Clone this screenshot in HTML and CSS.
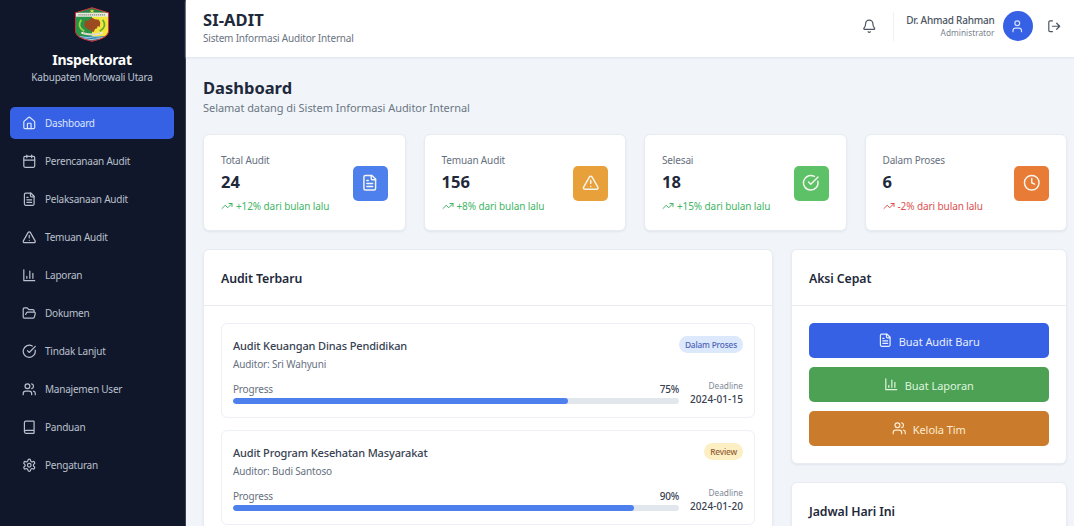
FILE: index.html
```html
<!DOCTYPE html>
<html lang="id">
<head>
<meta charset="utf-8">
<title>SI-ADIT</title>
<link rel="stylesheet" href="styles.css">
</head>
<body>
<svg class="sprite" width="0" height="0" aria-hidden="true">
  <symbol id="home" viewBox="0 0 24 24"><path d="M15 21v-8a1 1 0 0 0-1-1h-4a1 1 0 0 0-1 1v8"/><path d="M3 10a2 2 0 0 1 .709-1.528l7-5.999a2 2 0 0 1 2.582 0l7 5.999A2 2 0 0 1 21 10v9a2 2 0 0 1-2 2H5a2 2 0 0 1-2-2z"/></symbol>
  <symbol id="calendar" viewBox="0 0 24 24"><path d="M8 2v4M16 2v4M3 10h18"/><rect x="3" y="4" width="18" height="18" rx="2"/></symbol>
  <symbol id="file" viewBox="0 0 24 24"><path d="M15 2H6a2 2 0 0 0-2 2v16a2 2 0 0 0 2 2h12a2 2 0 0 0 2-2V7Z"/><path d="M14 2v4a2 2 0 0 0 2 2h4M10 9H8M16 13H8M16 17H8"/></symbol>
  <symbol id="alert" viewBox="0 0 24 24"><path d="m21.73 18-8-14a2 2 0 0 0-3.48 0l-8 14A2 2 0 0 0 4 21h16a2 2 0 0 0 1.73-3"/><path d="M12 9v4M12 17h.01"/></symbol>
  <symbol id="chart" viewBox="0 0 24 24"><path d="M3 3v18h18M18 17V9M13 17V5M8 17v-3"/></symbol>
  <symbol id="folder" viewBox="0 0 24 24"><path d="m6 14 1.5-2.9A2 2 0 0 1 9.24 10H20a2 2 0 0 1 1.94 2.5l-1.54 6a2 2 0 0 1-1.95 1.5H4a2 2 0 0 1-2-2V5a2 2 0 0 1 2-2h3.9a2 2 0 0 1 1.69.9l.81 1.2a2 2 0 0 0 1.67.9H18a2 2 0 0 1 2 2v2"/></symbol>
  <symbol id="check" viewBox="0 0 24 24"><path d="M21.801 10A10 10 0 1 1 17 3.335"/><path d="m9 11 3 3L22 4"/></symbol>
  <symbol id="users" viewBox="0 0 24 24"><path d="M16 21v-2a4 4 0 0 0-4-4H6a4 4 0 0 0-4 4v2"/><circle cx="9" cy="7" r="4"/><path d="M22 21v-2a4 4 0 0 0-3-3.87M16 3.13a4 4 0 0 1 0 7.75"/></symbol>
  <symbol id="book" viewBox="0 0 24 24"><path d="M4 19.5v-15A2.5 2.5 0 0 1 6.5 2H19a1 1 0 0 1 1 1v18a1 1 0 0 1-1 1H6.5a1 1 0 0 1 0-5H20"/></symbol>
  <symbol id="settings" viewBox="0 0 24 24"><path d="M12.22 2h-.44a2 2 0 0 0-2 2v.18a2 2 0 0 1-1 1.73l-.43.25a2 2 0 0 1-2 0l-.15-.08a2 2 0 0 0-2.73.73l-.22.38a2 2 0 0 0 .73 2.73l.15.1a2 2 0 0 1 1 1.72v.51a2 2 0 0 1-1 1.74l-.15.09a2 2 0 0 0-.73 2.73l.22.38a2 2 0 0 0 2.73.73l.15-.08a2 2 0 0 1 2 0l.43.25a2 2 0 0 1 1 1.73V20a2 2 0 0 0 2 2h.44a2 2 0 0 0 2-2v-.18a2 2 0 0 1 1-1.73l.43-.25a2 2 0 0 1 2 0l.15.08a2 2 0 0 0 2.73-.73l.22-.39a2 2 0 0 0-.73-2.73l-.15-.08a2 2 0 0 1-1-1.74v-.5a2 2 0 0 1 1-1.74l.15-.09a2 2 0 0 0 .73-2.73l-.22-.38a2 2 0 0 0-2.73-.73l-.15.08a2 2 0 0 1-2 0l-.43-.25a2 2 0 0 1-1-1.73V4a2 2 0 0 0-2-2z"/><circle cx="12" cy="12" r="3"/></symbol>
  <symbol id="bell" viewBox="0 0 24 24"><path d="M10.268 21a2 2 0 0 0 3.464 0"/><path d="M3.262 15.326A1 1 0 0 0 4 17h16a1 1 0 0 0 .74-1.673C19.41 13.956 18 12.499 18 8A6 6 0 0 0 6 8c0 4.499-1.411 5.956-2.738 7.326"/></symbol>
  <symbol id="user" viewBox="0 0 24 24"><path d="M19 21v-2a4 4 0 0 0-4-4H9a4 4 0 0 0-4 4v2"/><circle cx="12" cy="7" r="4"/></symbol>
  <symbol id="logout" viewBox="0 0 24 24"><path d="M9 21H5a2 2 0 0 1-2-2V5a2 2 0 0 1 2-2h4M16 17l5-5-5-5M21 12H9"/></symbol>
  <symbol id="trend" viewBox="0 0 24 24"><path d="M22 7l-8.5 8.5-5-5L2 17M16 7h6v6"/></symbol>
  <symbol id="clock" viewBox="0 0 24 24"><circle cx="12" cy="12" r="10"/><path d="M12 6v6l4 2"/></symbol>
</svg>
<div class="app">
  <aside class="sidebar">
    <div class="brand">
      <svg class="crest" viewBox="0 0 36 36">
        <defs><clipPath id="shield"><path d="M18 .8 35 6V25Q34.500 32 18 35.200Q1.500 32 1 25V6Z"/></clipPath></defs>
        <g clip-path="url(#shield)">
          <path fill="#279447" d="M0 0h18v36H0z"/><path fill="#f2e63d" d="M18 0h18v36H18z"/>
          <path fill="#258747" d="M0 0h36v6H0z"/>
          <path fill="#e9e9df" d="M0 6h36v4H0z"/>
          <path stroke="#81877d" stroke-width="1.300" stroke-dasharray="1.300 .7" d="M4 8h28"/>
          <path fill="#287fae" d="M0 30h36v6H0z"/>
          <path fill="none" stroke="#c5e4e9" stroke-width=".8" d="M2 31q4-1 8 0t8 0 8 0 8 0M5 33q4-1 8 0t8 0 8 0"/>
        </g>
        <path fill="none" stroke="#a4d444" stroke-width="1.800" d="M7 13q-5 7 3 12"/>
        <path fill="none" stroke="#61ac3b" stroke-width="1.800" d="M29 13q5 7-3 12"/>
        <path fill="#9c4a20" d="m11 14 3 .5 2-2.500 2-1 3 1.500 4 .5 1.500 3-.5 4.500-2-1-1 2.500-2 .5-1 3h-3l-.5-3-2.500 1.500-1-2.500-2-.5-1-3 1-2z"/>
        <path fill="#f0eadb" d="m7 25.500 4 1q7 1.500 14 0l4-1v2l-4 1q-7 1.500-14 0l-4-1z"/>
        <path fill="none" stroke="#9b8c78" stroke-width=".6" stroke-dasharray="1 .8" d="M9 27q9 2 18 0"/>
        <path fill="#f5d742" d="m18 2.200.8 1.500h1.700l-1.300 1 .5 1.500-1.700-1-1.700 1 .5-1.500-1.300-1h1.700z"/>
        <path fill="none" stroke="#d22f3a" stroke-width="1.100" d="M18 .8 35 6V25Q34.500 32 18 35.200Q1.500 32 1 25V6Z"/>
      </svg>
      <div class="brand-name">Inspektorat</div>
      <div class="brand-sub">Kabupaten Morowali Utara</div>
    </div>
    <nav class="nav">
      <a class="nav-item active"><svg class="icon"><use href="#home"/></svg><span>Dashboard</span></a>
      <a class="nav-item"><svg class="icon"><use href="#calendar"/></svg><span>Perencanaan Audit</span></a>
      <a class="nav-item"><svg class="icon"><use href="#file"/></svg><span>Pelaksanaan Audit</span></a>
      <a class="nav-item"><svg class="icon"><use href="#alert"/></svg><span>Temuan Audit</span></a>
      <a class="nav-item"><svg class="icon"><use href="#chart"/></svg><span>Laporan</span></a>
      <a class="nav-item"><svg class="icon"><use href="#folder"/></svg><span>Dokumen</span></a>
      <a class="nav-item"><svg class="icon"><use href="#check"/></svg><span>Tindak Lanjut</span></a>
      <a class="nav-item"><svg class="icon"><use href="#users"/></svg><span>Manajemen User</span></a>
      <a class="nav-item"><svg class="icon"><use href="#book"/></svg><span>Panduan</span></a>
      <a class="nav-item"><svg class="icon"><use href="#settings"/></svg><span>Pengaturan</span></a>
    </nav>
  </aside>
  <div class="page">
    <header class="topbar">
      <div>
        <div class="app-name">SI-ADIT</div>
        <div class="app-sub">Sistem Informasi Auditor Internal</div>
      </div>
      <div class="account">
        <svg class="icon bell"><use href="#bell"/></svg>
        <div class="profile">
          <div class="profile-text">
            <div class="profile-name">Dr. Ahmad Rahman</div>
            <div class="profile-role">Administrator</div>
          </div>
          <div class="avatar"><svg class="icon"><use href="#user"/></svg></div>
          <svg class="icon logout"><use href="#logout"/></svg>
        </div>
      </div>
    </header>
    <main class="content">
      <h1 class="title">Dashboard</h1>
      <p class="subtitle">Selamat datang di Sistem Informasi Auditor Internal</p>
      <section class="stats">
        <article class="card stat">
          <div><div class="stat-label">Total Audit</div><div class="stat-value">24</div><div class="stat-trend up"><svg class="icon"><use href="#trend"/></svg><span>+12% dari bulan lalu</span></div></div>
          <div class="tile blue"><svg class="icon"><use href="#file"/></svg></div>
        </article>
        <article class="card stat">
          <div><div class="stat-label">Temuan Audit</div><div class="stat-value">156</div><div class="stat-trend up"><svg class="icon"><use href="#trend"/></svg><span>+8% dari bulan lalu</span></div></div>
          <div class="tile amber"><svg class="icon"><use href="#alert"/></svg></div>
        </article>
        <article class="card stat">
          <div><div class="stat-label">Selesai</div><div class="stat-value">18</div><div class="stat-trend up"><svg class="icon"><use href="#trend"/></svg><span>+15% dari bulan lalu</span></div></div>
          <div class="tile green"><svg class="icon"><use href="#check"/></svg></div>
        </article>
        <article class="card stat">
          <div><div class="stat-label">Dalam Proses</div><div class="stat-value">6</div><div class="stat-trend down"><svg class="icon"><use href="#trend"/></svg><span>-2% dari bulan lalu</span></div></div>
          <div class="tile orange"><svg class="icon"><use href="#clock"/></svg></div>
        </article>
      </section>
      <section class="columns">
        <div class="card">
          <h2 class="card-head">Audit Terbaru</h2>
          <div class="card-body">
            <article class="audit">
              <div class="audit-top">
                <div><div class="audit-name">Audit Keuangan Dinas Pendidikan</div><div class="audit-by">Auditor: Sri Wahyuni</div></div>
                <span class="badge process">Dalam Proses</span>
              </div>
              <div class="audit-bottom">
                <div class="progress"><div class="progress-label"><span>Progress</span><span class="percent">75%</span></div><div class="track"><div class="fill" style="width:75%"></div></div></div>
                <div class="deadline"><div class="deadline-label">Deadline</div><div class="deadline-date">2024-01-15</div></div>
              </div>
            </article>
            <article class="audit">
              <div class="audit-top">
                <div><div class="audit-name">Audit Program Kesehatan Masyarakat</div><div class="audit-by">Auditor: Budi Santoso</div></div>
                <span class="badge review">Review</span>
              </div>
              <div class="audit-bottom">
                <div class="progress"><div class="progress-label"><span>Progress</span><span class="percent">90%</span></div><div class="track"><div class="fill" style="width:90%"></div></div></div>
                <div class="deadline"><div class="deadline-label">Deadline</div><div class="deadline-date">2024-01-20</div></div>
              </div>
            </article>
          </div>
        </div>
        <div class="side">
          <div class="card">
            <h2 class="card-head">Aksi Cepat</h2>
            <div class="card-body actions">
              <button class="action primary"><svg class="icon"><use href="#file"/></svg><span>Buat Audit Baru</span></button>
              <button class="action success"><svg class="icon"><use href="#chart"/></svg><span>Buat Laporan</span></button>
              <button class="action warning"><svg class="icon"><use href="#users"/></svg><span>Kelola Tim</span></button>
            </div>
          </div>
          <div class="card"><h2 class="card-head">Jadwal Hari Ini</h2></div>
        </div>
      </section>
    </main>
  </div>
</div>
</body>
</html>
```
FILE: styles.css
```css
* { box-sizing: border-box; }
body { margin: 0; height: 526px; overflow: hidden; background: #f1f5fa; color: #1e293b; font-family: "Noto Sans", "Open Sans", sans-serif; font-size: 10px; }
h1, h2, p { margin: 0; }
.sprite { position: absolute; }
.icon { display: block; flex: none; width: 14.5px; height: 14.5px; fill: none; stroke: currentColor; stroke-width: 2; stroke-linecap: round; stroke-linejoin: round; }
.app { display: flex; height: 526px; }

.sidebar { flex: none; width: 186px; background: #11172a; border-right: 1px solid #3c4252; }
.brand { display: flex; flex-direction: column; align-items: center; padding-top: 7px; padding-right: 1px; height: 107px; }
.crest { display: block; width: 36px; height: 35px; }
.brand-name { margin-top: 9px; color: #fff; font-size: 14px; line-height: 18px; font-weight: 700; letter-spacing: -.3px; }
.brand-sub { color: #bdc5d3; font-size: 10px; line-height: 16px; letter-spacing: -.2px; white-space: nowrap; }
.nav { display: flex; flex-direction: column; gap: 6px; padding: 0 11px 0 10px; }
.nav-item { display: flex; align-items: center; gap: 8.5px; height: 32px; padding-left: 12px; border-radius: 5px; color: #b9c0cd; font-size: 10px; letter-spacing: -.22px; }
.nav-item.active { background: #3761e4; color: #dbe6ff; }
.nav-item span { margin-top: -1px; }

.page { flex: 1; min-width: 0; }
.topbar { display: flex; justify-content: space-between; height: 57px; padding: 10px 13px 0 17px; background: #fff; box-shadow: 0 1px 2px #dbe2ea; }
.app-name { font-size: 16.500px; line-height: 20px; font-weight: 700; letter-spacing: .1px; }
.app-sub { color: #6b7583; font-size: 10px; line-height: 17px; letter-spacing: -.2px; }
.account { display: flex; align-items: center; height: 32px; gap: 17px; color: #4b5563; }
.profile { display: flex; align-items: center; height: 29px; padding-left: 12px; border-left: 1px solid #edf0f4; }
.profile-text { text-align: right; }
.profile-name { color: #4b5563; font-size: 10px; line-height: 14px; letter-spacing: -.22px; font-weight: 500; }
.profile-role { color: #7b8490; font-size: 8.300px; line-height: 12px; }
.avatar { display: grid; place-items: center; width: 30px; height: 30px; margin-left: 8px; border-radius: 50%; background: #3761e4; color: #d3e1ff; }
.logout { margin-left: 14px; }

.content { padding: 21px 7px 0 17px; }
.title { font-size: 16.500px; line-height: 20px; letter-spacing: 0; }
.subtitle { color: #6b7583; font-size: 11px; line-height: 20px; letter-spacing: -.05px; }
.card { background: #fff; border: 1px solid #e8ecf1; border-radius: 6px; box-shadow: 0 1px 2px #dfe5ec; }
.stats { display: grid; grid-template-columns: repeat(4, 1fr); gap: 18px; margin-top: 16px; }
.stat { display: flex; align-items: center; justify-content: space-between; height: 97px; padding: 1px 17px 0; }
.stat-label { color: #667080; font-size: 10px; line-height: 15px; letter-spacing: -.15px; }
.stat-value { margin-top: 2px; font-size: 16.500px; line-height: 24px; font-weight: 700; }
.stat-trend { display: flex; align-items: center; gap: 3px; margin-top: 5px; font-size: 10px; line-height: 15px; letter-spacing: -.1px; }
.stat-trend .icon { width: 12px; height: 12px; }
.up { color: #42b565; }
.down { color: #dc5050; }
.tile { display: grid; place-items: center; width: 35px; height: 35px; border-radius: 5px; color: #f5f5ee; }
.tile .icon { width: 17.500px; height: 17.500px; }
.blue { background: #4d80ed; }
.amber { background: #e8a13a; }
.green { background: #5dc267; }
.orange { background: #e87b35; }

.columns { display: grid; grid-template-columns: 570px 1fr; gap: 18px; margin-top: 18px; align-items: start; }
.side { display: grid; gap: 18px; }
.card-head { display: flex; align-items: center; height: 56px; padding: 2px 17px 0; border-bottom: 1px solid #e8ecf1; font-size: 12.300px; font-weight: 600; letter-spacing: -.08px; }
.card-body { display: flex; flex-direction: column; gap: 12px; padding: 17px; }
.audit { height: 95px; padding: 13px 11px 0; border: 1px solid #edf0f4; border-radius: 6px; }
.audit-top { display: flex; justify-content: space-between; align-items: flex-start; height: 43px; }
.audit-name { color: #374151; font-size: 11px; line-height: 18px; font-weight: 500; letter-spacing: -.14px; }
.audit-by { color: #667080; font-size: 10px; line-height: 18px; letter-spacing: -.15px; }
.badge { display: flex; align-items: center; height: 17px; margin-top: -1px; padding: 0 6px; border-radius: 9px; font-size: 8.300px; font-weight: 500; letter-spacing: -.17px; }
.process { background: #dce8fb; color: #4d65b8; }
.review { background: #fcefc4; color: #946036; }
.audit-bottom { display: flex; align-items: flex-start; gap: 11px; }
.progress { flex: 1; padding-top: 2px; }
.progress-label { display: flex; justify-content: space-between; color: #667080; font-size: 10px; line-height: 15px; letter-spacing: -.18px; }
.percent { color: #374151; font-weight: 500; letter-spacing: -.2px; }
.track { height: 6px; margin-top: 1px; border-radius: 3px; background: #e2e7ee; overflow: hidden; }
.fill { height: 6px; border-radius: 3px; background: #4d80ed; }
.deadline { width: 53px; text-align: right; }
.deadline-label { color: #818996; font-size: 8.300px; line-height: 12px; }
.deadline-date { color: #374151; font-size: 10px; line-height: 15px; font-weight: 500; letter-spacing: .08px; white-space: nowrap; }
.actions { gap: 9px; }
.action { display: flex; align-items: center; justify-content: center; gap: 6px; height: 35px; padding: 0; border: 0; border-radius: 5px; font: 11px "Noto Sans", "Open Sans", sans-serif; letter-spacing: -.05px; color: #e6eeff; }
.action span { padding-top: 2px; }
.primary { background: #3761e4; }
.success { background: #4ca154; color: #dff5df; }
.warning { background: #ca7c2c; color: #fcebd0; }
```
